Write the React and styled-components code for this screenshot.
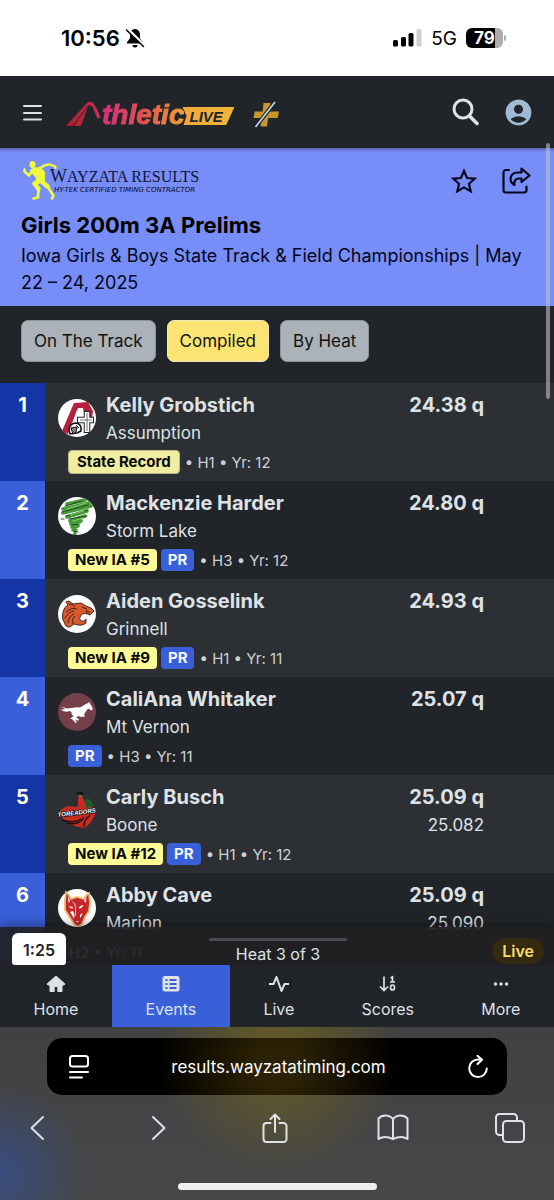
import React from "react";
import styled, { createGlobalStyle, css } from "styled-components";
import { MdAccountCircle } from "react-icons/md";

const GlobalStyle = createGlobalStyle`
  * { box-sizing: border-box; }
  body {
    margin: 0;
    background: #212428;
    font-family: Inter, "Liberation Sans", sans-serif;
    color: #dee2e6;
  }
  h1, p, ol { margin: 0; padding: 0; }
  button { font: inherit; color: inherit; border: 0; padding: 0; background: none; cursor: pointer; }
  a { color: inherit; text-decoration: none; }
  svg { display: block; flex: none; }
`;

const Screen = styled.div`
  position: relative;
  display: flex;
  flex-direction: column;
  height: 100vh;
  overflow: hidden;
`;

/* Phone status bar */
const StatusBar = styled.div`
  flex: none;
  display: flex;
  justify-content: space-between;
  align-items: center;
  height: 76px;
  padding: 0 48px 0 61px;
  background: #fff;
  color: #000;
`;
const StatusGroup = styled.div`
  display: flex;
  align-items: center;
  gap: ${(p) => p.$gap}px;
`;
const Clock = styled.span`
  font-size: 22px;
  font-weight: 600;
`;
const Network = styled.span`
  font-size: 19px;
`;
const Battery = styled.span`
  display: flex;
  align-items: center;
  gap: 1px;
  &::after {
    content: "";
    width: 2px;
    height: 6px;
    border-radius: 0 2px 2px 0;
    background: #adadad;
  }
`;
const BatteryLevel = styled.span`
  width: 37px;
  height: 20px;
  border-radius: 6px;
  background: linear-gradient(to right, #000 79%, #adadad 79%);
  color: #fff;
  font-size: 17px;
  font-weight: 700;
  line-height: 20px;
  text-align: center;
`;

/* Site header */
const Header = styled.header`
  flex: none;
  display: flex;
  align-items: center;
  height: 72px;
  padding: 0 20px 0 22px;
  background: #212428;
`;
const IconButton = styled.button`
  display: flex;
  align-items: center;
  justify-content: center;
`;
const Brand = styled.a`
  display: flex;
  align-items: center;
  height: 28px;
  margin: 6px 0 0 24px;
`;
const BrandWord = styled.span`
  font: italic 700 28px/28px "Liberation Sans", sans-serif;
  background: linear-gradient(to right, #d3307c, #e0524e 50%, #f0a03a);
  background-clip: text;
  -webkit-text-stroke: 1px transparent;
  color: transparent;
`;
const BrandTag = styled.span`
  width: 52px;
  height: 18px;
  margin: 2px 19px 0 -2px;
  padding-left: 7px;
  background: linear-gradient(to right, #f2a53c, #eeb83a);
  clip-path: polygon(0 0, 100% 0, 84% 100%, 2% 100%, 8% 50%);
  color: #212428;
  font: italic 700 15px/19px "Liberation Sans", sans-serif;
`;
const HeaderTools = styled.div`
  display: flex;
  align-items: center;
  gap: 24px;
  margin-left: auto;
`;

/* Event banner */
const Banner = styled.section`
  flex: none;
  height: 158px;
  padding: 12px 21px 10px;
  background: #778df7 linear-gradient(#5a68ac, #778df7) 0 0 / 100% 4px no-repeat;
  color: #04071a;
`;
const BannerTop = styled.div`
  display: flex;
  align-items: flex-start;
  justify-content: space-between;
  height: 51px;
`;
const Sponsor = styled.a`
  display: flex;
`;
const SponsorText = styled.span`
  display: flex;
  flex-direction: column;
  margin: 6px 0 0 -9px;
`;
const SponsorName = styled.span`
  font: 16px/20px "Liberation Serif", serif;
  color: #10143a;
  &::first-letter { font-size: 18px; }
`;
const SponsorNote = styled.span`
  padding-left: 4px;
  font: italic 400 7px/7px "DejaVu Sans", sans-serif;
  color: #04071a;
`;
const BannerTools = styled.div`
  display: flex;
  align-items: center;
  gap: 23px;
  padding: 6px 2px 0 0;
`;
const Title = styled.h1`
  font-size: 22px;
  font-weight: 700;
  line-height: 28px;
  color: #000;
`;
const Subtitle = styled.p`
  padding-top: 3px;
  font-size: 18px;
  line-height: 27px;
`;

/* View filter */
const Filters = styled.div`
  flex: none;
  display: flex;
  gap: 11px;
  padding: 14px 21px 21px;
`;
const FilterButton = styled.button`
  height: 42px;
  padding: 0 12px;
  border: 1px solid ${(p) => (p.$active ? "#efe6c0" : "#8d9298")};
  border-radius: 7px;
  background: ${(p) => (p.$active ? "#fbe471" : "#abb2b9")};
  color: #111;
  font-size: 17px;
`;

/* Results */
const ResultsPane = styled.main`
  position: relative;
  flex: 1;
  min-height: 0;
  overflow: hidden;
`;
const ResultList = styled.ol`
  list-style: none;
`;
const ResultRow = styled.li`
  display: flex;
  height: 98px;
  background: #212428;
  &:nth-child(odd) { background: #2c2f33; }
`;
const Rank = styled.span`
  flex: none;
  width: 45px;
  padding-top: 8px;
  background: #3a60d9;
  color: #fff;
  font-size: 20px;
  font-weight: 700;
  line-height: 28px;
  text-align: center;
  ${ResultRow}:nth-child(odd) & { background: #1435a5; }
`;
const ResultBody = styled.div`
  flex: 1;
  padding: 8px 70px 0 13px;
`;
const Athlete = styled.div`
  display: flex;
  align-items: flex-start;
  gap: 10px;
`;
const TeamLogo = styled.svg`
  width: 38px;
  height: 38px;
  margin-top: 8px;
`;
const Lines = styled.div`
  display: flex;
  flex-direction: column;
  font-size: 17px;
  line-height: 28px;
  ${(p) => p.$end && css`
    margin-left: auto;
    text-align: right;
  `}
`;
const Strong = styled.span`
  font-size: 20px;
  font-weight: 700;
`;
const Meta = styled.div`
  display: flex;
  align-items: center;
  gap: 4px;
  height: 29px;
  padding: 1px 0 0 10px;
  font-size: 15px;
`;
const Badge = styled.span`
  height: 22px;
  padding: 0 7px;
  border-radius: 4px;
  font-weight: 700;
  line-height: 22px;
  ${(p) => p.$kind === "rank" && css`background: #fdfb94; color: #0a0a0a;`}
  ${(p) => p.$kind === "pr" && css`background: #3a60d9; color: #f4f6fb;`}
  ${(p) => p.$kind === "record" && css`
    height: 24px;
    padding: 0 8px;
    border: 1px solid #b9b78e;
    background: #f0eda0;
    color: #0a0a0a;
  `}
`;
const MetaText = styled.span`
  padding-left: 1px;
  color: #ced2d6;
`;

/* Heat tracker that floats over the list */
const HeatBar = styled.div`
  position: absolute;
  inset: auto 0 0;
  display: flex;
  align-items: flex-end;
  justify-content: space-between;
  height: 38px;
  padding: 0 10px 0 12px;
  background: rgba(32, 32, 35, 0.93);
  box-shadow: 0 -3px 10px rgba(0, 0, 0, 0.35);
  font-size: 16px;
`;
const HeatSide = styled.div`
  flex: 1;
  display: flex;
  justify-content: ${(p) => (p.$end ? "flex-end" : "flex-start")};
`;
const Timer = styled.span`
  width: 54px;
  height: 32px;
  border-radius: 6px 6px 3px 3px;
  background: #fff;
  color: #212428;
  font-weight: 600;
  line-height: 34px;
  text-align: center;
`;
const HeatLabel = styled.div`
  display: flex;
  flex-direction: column;
  align-items: center;
  width: 138px;
  line-height: 22px;
  &::before {
    content: "";
    width: 100%;
    height: 3px;
    margin-bottom: 2px;
    border-radius: 2px;
    background: #48494c;
  }
`;
const LivePill = styled.span`
  height: 26px;
  margin-bottom: 1px;
  padding: 0 10px;
  border-radius: 13px;
  background: #332a10;
  color: #f8dc6c;
  font-weight: 600;
  line-height: 26px;
`;

/* App tabs */
const TabBar = styled.nav`
  flex: none;
  display: flex;
  height: 62px;
  background: #212428;
`;
const Tab = styled.a`
  flex: 1 1 auto;
  display: flex;
  flex-direction: column;
  align-items: center;
  padding-top: 9px;
  background: ${(p) => (p.$active ? "#3a60d9" : "transparent")};
  font-size: 16px;
  line-height: 26px;
  gap: 2px;
`;

/* Browser chrome */
const BrowserBar = styled.footer`
  flex: none;
  height: 173px;
  padding: 11px 0 0;
  background:
    radial-gradient(circle at 0 145px, rgba(52, 78, 140, 0.8), transparent 85px),
    radial-gradient(ellipse 120px 125px at 278px 25px, rgba(106, 95, 32, 0.75) 20%, transparent),
    linear-gradient(#414143, #464749);
`;
const AddressBar = styled.div`
  display: flex;
  align-items: center;
  justify-content: space-between;
  height: 57px;
  margin: 0 47px;
  padding: 0 17px 0 20px;
  border-radius: 15px;
  background: radial-gradient(ellipse 120px 110px at 50% 50%, #2b2104 20%, #000);
  color: #fff;
  font-size: 17px;
`;
const BrowserTools = styled.div`
  display: flex;
  align-items: center;
  justify-content: space-between;
  height: 66px;
  padding: 0 29px 0 27px;
`;
const HomeIndicator = styled.div`
  width: 199px;
  height: 7px;
  margin: 22px auto 0;
  border-radius: 4px;
  background: #efefef;
`;
const ScrollThumb = styled.div`
  position: absolute;
  top: 143px;
  right: 4px;
  width: 4px;
  height: 256px;
  border-radius: 2px;
  background: rgba(190, 190, 200, 0.6);
`;

const Stroke = ({ size = 30, width = 2, children, ...rest }) => (
  <svg width={size} height={size} viewBox={`0 0 ${size} ${size}`} fill="none" stroke="currentColor"
    strokeWidth={width} strokeLinecap="round" strokeLinejoin="round" aria-hidden="true" {...rest}>
    {children}
  </svg>
);

const BellOff = () => (
  <svg width="20" height="20" viewBox="0 0 20 20" aria-hidden="true">
    <path d="M10 1c-3 .3-5 2.600-5 5.500v3.800L2 14.200V15.500h16v-1.300l-3-3.900V6.500C15 3.600 13 1.300 10 1z" />
    <path d="M7.500 17h5a2.500 2.500 0 0 1-5 0z" />
    <path d="M2.500 1 19.500 17.500" stroke="#fff" strokeWidth="3" />
    <path d="M1.500 2 18.500 18.500" stroke="#000" strokeWidth="1.500" strokeLinecap="round" />
  </svg>
);

const Signal = () => (
  <svg width="30" height="20" viewBox="0 0 30 20" aria-hidden="true">
    <rect x="1" y="12" width="5" height="6.500" rx="1.500" />
    <rect x="9" y="9" width="5" height="9.500" rx="1.500" />
    <rect x="16.500" y="5" width="5" height="13.500" rx="1.500" />
    <rect x="24.500" y="1" width="5" height="17.500" rx="1.500" fill="#cfcfcf" />
  </svg>
);

const BrandMark = () => (
  <svg width="36" height="28" viewBox="0 0 36 28" aria-hidden="true">
    <defs>
      <linearGradient id="mark" x1="0" x2="1">
        <stop offset="0" stopColor="#a81f2c" />
        <stop offset="1" stopColor="#c92d55" />
      </linearGradient>
    </defs>
    <path d="M0 25 20 3Q23-.5 26.500 1.500 30 5 34.500 16l-3.500 2Q28 9 26 6 23.500 4 21.500 6.500L15 25z" fill="url(#mark)" />
    <path d="M7 25 21.500 5.500q2.500-2 4.500.5l5 12" fill="none" stroke="#212428" strokeWidth="1" />
    <path d="M14 26 24 10l3 3-4 13z" fill="#212428" />
  </svg>
);

const PlusMark = () => (
  <svg width="27" height="28" viewBox="0 0 27 28" aria-hidden="true">
    <path d="M10.500 2h7l-1.300 8.500h9.800l-1.300 6.500h-9.500L14 25.500H7.500L8.800 17H.5l1.200-6.500h8z" fill="#c8962b" />
    <path d="M22 1 2.500 26" stroke="#212428" strokeWidth="4" />
    <path d="M22 1 2.500 26" stroke="#bcd3e8" strokeWidth="1.800" />
  </svg>
);

const Runner = () => (
  <svg width="38" height="42" viewBox="0 0 38 42" aria-hidden="true" fill="none" stroke="#eefb3c" strokeLinecap="round" strokeLinejoin="round">
    <ellipse cx="11.500" cy="4.500" rx="3" ry="3.600" fill="#eefb3c" stroke="none" />
    <path d="M10 9Q14 6 20 8q5 3 4 7 0 4 0 7l-8 2q-2-3-1-6-4-4-6-8z" fill="#eefb3c" stroke="none" />
    <path d="M11 11 8 15.500 3.500 11.500V9.500" strokeWidth="2.600" />
    <path d="M18 8.500Q25 4 29 4.500l5 2 .5 1.500" strokeWidth="2.400" />
    <path d="M19 20.500 13.500 23.500l4 5.500" strokeWidth="4.600" />
    <path d="m17.500 29.500-.5 8-4.500 1" strokeWidth="2.800" />
    <path d="m21 21.500 5.500 5" strokeWidth="4.600" />
    <path d="m27 27 5.500 9-1.500 2.500" strokeWidth="2.600" />
  </svg>
);

const teamArt = {
  assumption: (
    <>
      <circle cx="19" cy="19" r="19" fill="#fff" />
      <path d="M4 32 16 4l14-1 5 9-1 8-6-6-4-3-5 0-9 24q-4-1-6-3z" fill="#b5203c" />
      <path d="m17 17 3-8h5l1 8z" fill="#fff" />
      <path d="M29 12v22M19 21h17" stroke="#222" strokeWidth="6.500" />
      <path d="M29 13v20M20 21h15" stroke="#fff" strokeWidth="4.500" />
      <path d="M29 14v18M22 21h12" stroke="#333" strokeWidth=".7" />
      <path d="M11 31q1-7 7-7 6 1 5 8l-4 2-7 1z" fill="#fff" stroke="#111" strokeWidth="1.500" />
      <path d="m13 29 6-1-1 5-3 2zm5-3 3 3" fill="#888" stroke="#111" />
    </>
  ),
  storm: (
    <>
      <circle cx="19" cy="19" r="19" fill="#fff" />
      <g fill="none" strokeLinecap="round">
        <path d="M9 7 27 3M5 12 31 6M5 16 33 9M9 20l20-6M12 24l15-5M13 27l10-3M14 30l6-1M15 33l3 0M17 36v.5" stroke="#479a38" strokeWidth="3.600" />
        <path d="M7 9 24 4M4 15 30 8M8 19l22-6M11 22l18-3M14 28l8-1M3 22l3 0M16 34l4 1" stroke="#1d3c1b" strokeWidth=".9" />
        <path d="M9 12 28 6M12 18l14-4M15 24l10-3" stroke="#86cf68" strokeWidth="1" />
      </g>
    </>
  ),
  tiger: (
    <>
      <circle cx="19" cy="19" r="19" fill="#fff" />
      <path d="M8 7l3-1 4 3 8-1 5 3 5 2 3 3-2 2-2 2q-6-3-9 0-3 4 0 6 4 1 5-2l0 4q-3 3-8 2l-4-1-4 3q-5 0-5-3Q3 24 5 17q1-5 5-7z" fill="#d75b2f" stroke="#3b1a10" strokeWidth=".9" />
      <path d="M8 17q6-5 11-3M7 23q3-6 9-7M10 28q0-6 6-9M15 29q-2-5 2-8M11 9q4 0 6 3M24 12l5 2M29 15l-1 2 4 0" fill="none" stroke="#3b1a10" strokeWidth=".9" />
    </>
  ),
  mustang: (
    <>
      <circle cx="19" cy="19" r="19" fill="#75404a" />
      <path d="M3 14q4 0 6 1.500l5-.5q4-1 8-.5l5-3 3-1.500 1-1 1 1.500 3 5.500-1.500 1.500-3.500-2-2.500 3.500-1.500 2.500 1 2-4 .5-2.500-1-2.500 1.500 3 1.500-1 2-1.500-1-1.500-.5 2 3-1.500.5-3.500-4-2-.5 4-2.500q-3-1-2.500-4l-2-1q-4 2-9-1.500 3 0 5-.5z" fill="#fff" />
    </>
  ),
  toreador: (
    <>
      <path d="M1 21Q7 13 18 16q10-5 20 3-1 10-11 18Q6 35 1 21z" fill="#c62a20" />
      <path d="M4 29q12 4 19-1M9 32q12 3 17-6M26 36q-1-6 6-12" fill="none" stroke="#1b1010" strokeWidth="1.400" />
      <path d="M26 10q4-5 7 0l3 5-8 2z" fill="#1f5a2a" />
      <path d="M20 7h5l3 7-1 3h-7z" fill="#c62a20" />
      <path d="M20.500 3h4v4h-4z" fill="#8a5a44" />
      <path d="M18 2q5-2 8 .5l-1.500 1.500-5-.5z" fill="#111" />
      <text x="0" y="26" transform="rotate(-7 0 26)" fontFamily="Liberation Sans, sans-serif" fontWeight="700" fontStyle="italic" fontSize="6" fill="#fff" stroke="#111" strokeWidth="1.500" paintOrder="stroke">TOREADORS</text>
    </>
  ),
  wolf: (
    <>
      <circle cx="19" cy="19" r="19" fill="#fff" />
      <path d="M8 3q3 2 5 7l6-2 7 2q2-4 5-6l1 10-1 8-4 6-3 7-4 3-4-3-5-8-4-6 0-9z" fill="#c5282c" stroke="#f2bd6a" strokeWidth="1.800" />
      <path d="m10 7 2 5-1.500 2zM28.500 8l-2.500 4.500 2 1zM10.500 17l4 1 1 1.500-3-.5zM21 18q3-2.500 4.500-1.500Q24 19 21 19.500zM15 22l1.500 4-.5 4-2-4-2-3zM24.500 24q-.5 3-2.500 5l0-3zM18 32h3l-1.500 1.500z" fill="#fff" />
      <path d="M14.500 12.500q3 2 3 6v8" fill="none" stroke="#fff" strokeWidth=".8" />
    </>
  ),
};

const results = [
  { name: "Kelly Grobstich", school: "Assumption", logo: "assumption", time: "24.38 q", badges: [["record", "State Record"]], heat: "H1", year: 12 },
  { name: "Mackenzie Harder", school: "Storm Lake", logo: "storm", time: "24.80 q", badges: [["rank", "New IA #5"], ["pr", "PR"]], heat: "H3", year: 12 },
  { name: "Aiden Gosselink", school: "Grinnell", logo: "tiger", time: "24.93 q", badges: [["rank", "New IA #9"], ["pr", "PR"]], heat: "H1", year: 11 },
  { name: "CaliAna Whitaker", school: "Mt Vernon", logo: "mustang", time: "25.07 q", badges: [["pr", "PR"]], heat: "H3", year: 11 },
  { name: "Carly Busch", school: "Boone", logo: "toreador", time: "25.09 q", exact: "25.082", badges: [["rank", "New IA #12"], ["pr", "PR"]], heat: "H1", year: 12 },
  { name: "Abby Cave", school: "Marion", logo: "wolf", time: "25.09 q", exact: "25.090", badges: [], heat: "H2", year: 11 },
];

const tabs = [
  { label: "Home", icon: <path d="M10 2 1 10l1 1h2v6.500h4.200v-5h3.600v5H16V11h2l1-1z" fill="currentColor" stroke="currentColor" strokeLinejoin="round" /> },
  {
    label: "Events",
    icon: (
      <>
        <rect x="1.500" y="2" width="17" height="15.500" rx="2.500" fill="currentColor" />
        <path d="M4.500 6h2M4.500 10h2M4.500 14h2M8.500 6h7M8.500 10h7M8.500 14h7" stroke="#3a60d9" strokeWidth="1.800" />
      </>
    ),
  },
  { label: "Live", icon: <path d="M0 10h4.500L7.500 3l5 14 3-7H20" fill="none" stroke="currentColor" strokeWidth="2" strokeLinejoin="round" /> },
  {
    label: "Scores",
    icon: (
      <g fill="none" stroke="currentColor" strokeWidth="1.700">
        <path d="M6 2.500V16M2 12.500 6 16.500l4-4" />
        <path d="M12.500 4 14.500 3v5M12 8h5" />
        <ellipse cx="14.500" cy="13.500" rx="2" ry="2.500" />
      </g>
    ),
  },
  { label: "More", icon: <g fill="currentColor"><circle cx="4.500" cy="10" r="1.700" /><circle cx="10" cy="10" r="1.700" /><circle cx="15.500" cy="10" r="1.700" /></g> },
];

function Result({ place, result }) {
  const { name, school, logo, time, exact, badges, heat, year } = result;
  return (
    <ResultRow>
      <Rank>{place}</Rank>
      <ResultBody>
        <Athlete>
          <TeamLogo viewBox="0 0 38 38" role="img" aria-label={school}>{teamArt[logo]}</TeamLogo>
          <Lines>
            <Strong>{name}</Strong>
            <span>{school}</span>
          </Lines>
          <Lines $end>
            <Strong>{time}</Strong>
            {exact && <span>{exact}</span>}
          </Lines>
        </Athlete>
        <Meta>
          {badges.map(([kind, text]) => <Badge key={kind} $kind={kind}>{text}</Badge>)}
          <MetaText>{badges.length > 0 && "• "}{heat} • Yr: {year}</MetaText>
        </Meta>
      </ResultBody>
    </ResultRow>
  );
}

export default function App() {
  return (
    <Screen>
      <GlobalStyle />
      <StatusBar>
        <StatusGroup $gap={5}>
          <Clock>10:56</Clock>
          <BellOff />
        </StatusGroup>
        <StatusGroup $gap={9}>
          <Signal />
          <Network>5G</Network>
          <Battery><BatteryLevel>79</BatteryLevel></Battery>
        </StatusGroup>
      </StatusBar>

      <Header>
        <IconButton aria-label="Menu">
          <Stroke size={20}><path d="M2 4h17M2 11h17M2 17.500h17" /></Stroke>
        </IconButton>
        <Brand href="#" aria-label="Athletic Live">
          <BrandMark />
          <BrandWord>thletic</BrandWord>
          <BrandTag>LIVE</BrandTag>
          <PlusMark />
        </Brand>
        <HeaderTools>
          <IconButton aria-label="Search">
            <Stroke size={28} width={3}><circle cx="12" cy="11" r="9" /><path d="m18.500 18 7.500 7.500" strokeWidth="3.500" /></Stroke>
          </IconButton>
          <IconButton aria-label="Account"><MdAccountCircle size={31} color="#a0bad3" /></IconButton>
        </HeaderTools>
      </Header>

      <Banner>
        <BannerTop>
          <Sponsor href="#">
            <Runner />
            <SponsorText>
              <SponsorName>WAYZATA RESULTS</SponsorName>
              <SponsorNote>HY-TEK CERTIFIED TIMING CONTRACTOR</SponsorNote>
            </SponsorText>
          </Sponsor>
          <BannerTools>
            <IconButton aria-label="Favorite">
              <Stroke size={28} width={2.2} strokeLinejoin="miter">
                <path d="m14 4 3.100 7 7.600.7-5.700 5.100 1.700 7.500-6.700-3.900-6.700 3.900L9 16.800l-5.700-5.100 7.600-.7z" />
              </Stroke>
            </IconButton>
            <IconButton aria-label="Share">
              <Stroke size={30} width={2.2}>
                <path d="M8 4H5a2.500 2.500 0 0 0-2.500 2.500V24A2.500 2.500 0 0 0 5 26.500h18a2.500 2.500 0 0 0 2.500-2.500v-3.500" />
                <path d="M20.500 2.500 28.500 9.500 20.500 16v-3.500h-3Q12.500 13 13.500 19 9.500 16.500 9.500 13 10 6.500 17 6.500h3.500z" />
              </Stroke>
            </IconButton>
          </BannerTools>
        </BannerTop>
        <Title>Girls 200m 3A Prelims</Title>
        <Subtitle>Iowa Girls &amp; Boys State Track &amp; Field Championships | May 22 – 24, 2025</Subtitle>
      </Banner>

      <Filters>
        <FilterButton>On The Track</FilterButton>
        <FilterButton $active aria-pressed="true">Compiled</FilterButton>
        <FilterButton>By Heat</FilterButton>
      </Filters>

      <ResultsPane>
        <ResultList>
          {results.map((result, i) => <Result key={result.name} place={i + 1} result={result} />)}
        </ResultList>
        <HeatBar>
          <HeatSide><Timer>1:25</Timer></HeatSide>
          <HeatLabel>Heat 3 of 3</HeatLabel>
          <HeatSide $end><LivePill>Live</LivePill></HeatSide>
        </HeatBar>
      </ResultsPane>

      <TabBar>
        {tabs.map(({ label, icon }) => (
          <Tab key={label} href="#" $active={label === "Events"}>
            <svg width="20" height="20" viewBox="0 0 20 20" aria-hidden="true">{icon}</svg>
            {label}
          </Tab>
        ))}
      </TabBar>

      <BrowserBar>
        <AddressBar>
          <IconButton aria-label="Page settings">
            <Stroke size={24}><rect x="3" y="1" width="18" height="10.500" rx="2.500" /><path d="M3 17h18M3 22.500h12" /></Stroke>
          </IconButton>
          <span>results.wayzatatiming.com</span>
          <IconButton aria-label="Reload">
            <Stroke size={24}><path d="M12 4.500A8.800 8.800 0 1 0 20.800 13.500M12 4.500h4M11.500.8l4.500 3.900-4.500 4.300" /></Stroke>
          </IconButton>
        </AddressBar>
        <BrowserTools>
          <IconButton aria-label="Back"><Stroke size={30}><path d="M16 4 4.500 15 16 26" /></Stroke></IconButton>
          <IconButton aria-label="Forward"><Stroke size={30}><path d="m9 4 11.500 11L9 26" /></Stroke></IconButton>
          <IconButton aria-label="Share page">
            <Stroke size={30}><path d="M10.500 10H6.500A3 3 0 0 0 3.500 13v13a3 3 0 0 0 3 3h17a3 3 0 0 0 3-3V13a3 3 0 0 0-3-3H19.500M15 19V1.500M10.500 6 15 1.500l4.500 4.500" /></Stroke>
          </IconButton>
          <IconButton aria-label="Bookmarks">
            <Stroke size={32}><path d="M16 7Q13 3.500 8.500 3.500 4 3.500 1.500 6.500V27q6-4 14.500 0 8.500-4 14.500 0V6.500Q28 3.500 23.500 3.500 19 3.500 16 7v20" /></Stroke>
          </IconButton>
          <IconButton aria-label="Tabs">
            <Stroke size={30}><rect x="8" y="8" width="21" height="21" rx="3.500" /><path d="M8 22H4.500A3.500 3.500 0 0 1 1 18.500v-14A3.500 3.500 0 0 1 4.500 1h14A3.500 3.500 0 0 1 22 4.500V8" /></Stroke>
          </IconButton>
        </BrowserTools>
        <HomeIndicator />
      </BrowserBar>
      <ScrollThumb />
    </Screen>
  );
}
